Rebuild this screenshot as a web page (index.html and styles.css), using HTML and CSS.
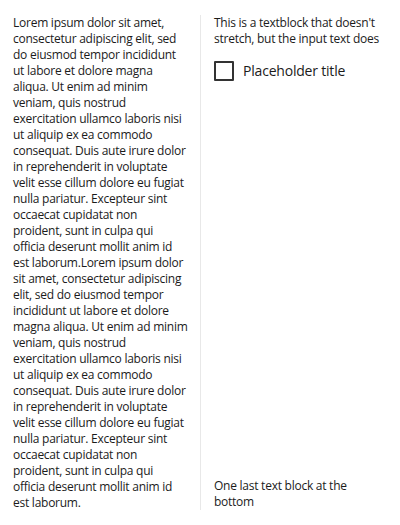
FILE: index.html
```html
<!DOCTYPE html>
<html>
<head>
<meta charset="utf-8">
<link rel="stylesheet" href="styles.css">
</head>
<body>
<div class="page">
  <div class="col-left">
    <p class="body-text">Lorem ipsum dolor sit amet, consectetur adipiscing elit, sed do eiusmod tempor incididunt ut labore et dolore magna aliqua. Ut enim ad minim veniam, quis nostrud exercitation ullamco laboris nisi ut aliquip ex ea commodo consequat. Duis aute irure dolor in reprehenderit in voluptate velit esse cillum dolore eu fugiat nulla pariatur. Excepteur sint occaecat cupidatat non proident, sunt in culpa qui officia deserunt mollit anim id est laborum.Lorem ipsum dolor sit amet, consectetur adipiscing elit, sed do eiusmod tempor incididunt ut labore et dolore magna aliqua. Ut enim ad minim veniam, quis nostrud exercitation ullamco laboris nisi ut aliquip ex ea commodo consequat. Duis aute irure dolor in reprehenderit in voluptate velit esse cillum dolore eu fugiat nulla pariatur. Excepteur sint occaecat cupidatat non proident, sunt in culpa qui officia deserunt mollit anim id est laborum.</p>
  </div>
  <div class="col-right">
    <p class="body-text">This is a textblock that doesn't stretch, but the input text does</p>
    <label class="check">
      <span class="box"></span>
      <span class="check-label">Placeholder title</span>
    </label>
    <p class="body-text bottom">One last text block at the bottom</p>
  </div>
</div>
</body>
</html>
```
FILE: styles.css
```css
html, body {
  margin: 0;
  padding: 0;
  background: #ffffff;
}
body {
  width: 400px;
  height: 525px;
  font-family: "Segoe UI", "Open Sans", sans-serif;
  color: #1b1b1b;
}
.page {
  display: flex;
  height: 525px;
  box-sizing: border-box;
  padding: 15px 0 15px 0;
}
.col-left {
  width: 201px;
  box-sizing: border-box;
  padding: 0 12.4px 0 13px;
  border-right: 1px solid #e8e8e8;
}
.col-right {
  flex: 1;
  display: flex;
  flex-direction: column;
  padding: 0 14px 0 13px;
}
.body-text {
  margin: 0;
  font-size: 12px;
  line-height: 16px;
  letter-spacing: -0.25px;
}
.check {
  display: flex;
  align-items: center;
  gap: 9px;
  margin-top: 14px;
}
.box {
  width: 16px;
  height: 16px;
  border: 2px solid #333333;
  border-radius: 1px;
}
.check-label {
  font-size: 14px;
  line-height: 20px;
  letter-spacing: -0.2px;
}
.bottom {
  margin-top: auto;
}
```
